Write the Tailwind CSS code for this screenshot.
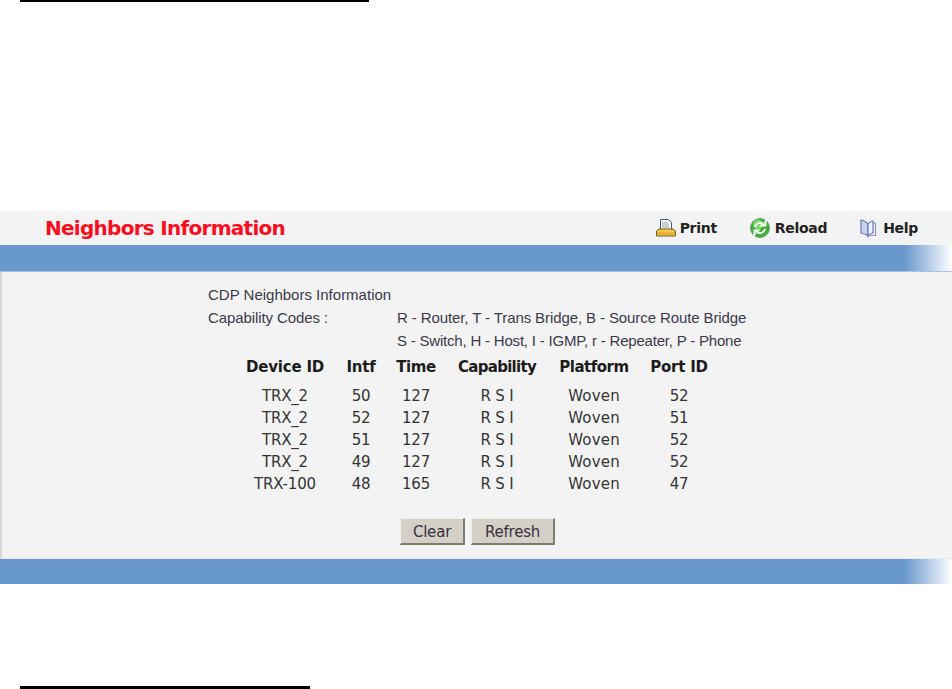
<!DOCTYPE html>
<html lang="en">
<head>
  <meta charset="UTF-8" />
  <title>Neighbors Information</title>
  <script src="https://cdn.jsdelivr.net/npm/@tailwindcss/browser@4"></script>
</head>
<body class="bg-white w-[952px] h-[689px] overflow-hidden flex flex-col font-['Liberation_Sans',sans-serif]">
  <div class="ml-[20px] w-[349px] h-[2px] bg-black"></div>

  <div class="mt-[209px] w-full">
    <!-- title row -->
    <div class="h-[34px] bg-[#f3f3f3] flex items-center pl-[45px] pr-[34px]">
      <h1 class="text-[20px] font-bold text-[#fa0d1e] font-['DejaVu_Sans',sans-serif] tracking-[-0.72px] flex-1">Neighbors Information</h1>
      <div class="flex items-center text-[14px] font-bold text-[#222] font-['DejaVu_Sans',sans-serif] tracking-[-0.3px]">
        <a class="flex items-center gap-[4px] mr-[33px]">
          <svg width="20" height="20" viewBox="1 0 20 20">
            <path d="M5.500 1.500h8l3 3v7h-11z" fill="#eef2f4" stroke="#4a5a78" stroke-width="1"/>
            <path d="M7 5h6M7 7h7M7 9h7" stroke="#9fb0a8" stroke-width="1"/>
            <path d="M4 11h14l2.500 2v5h-19v-5z" fill="#f6c945" stroke="#6d5a2e" stroke-width="1"/>
            <path d="M2.500 15.500h17" stroke="#e8a52a" stroke-width="2"/>
          </svg>
          Print
        </a>
        <a class="flex items-center gap-[5px] mr-[31px]">
          <svg width="20" height="20" viewBox="0 0 20 20">
            <circle cx="10" cy="10" r="9.500" fill="#3fae3a" stroke="#6f9f78" stroke-width="1"/>
            <circle cx="8" cy="6.500" r="5" fill="#7fd66e"/>
            <path d="M5 9a5 5 0 0 1 8-3l-1.500 1.500h4v-4l-1.300 1.300" fill="none" stroke="#fff" stroke-width="1.800"/>
            <path d="M15 11a5 5 0 0 1-8 3l1.500-1.500h-4v4l1.300-1.300" fill="none" stroke="#fff" stroke-width="1.800"/>
          </svg>
          Reload
        </a>
        <a class="flex items-center gap-[5px]">
          <svg width="20" height="20" viewBox="0 0 20 20">
            <path d="M10 6c-1.500-2-4-3.500-7-4v13c3 .5 5.500 1.500 7 3z" fill="#c9d2ee" stroke="#6c78b4" stroke-width="1.200"/>
            <path d="M10 6c1-1.500 2.500-2.500 5-3v12c-2.500.5-4 1.500-5 3z" fill="#eef1fa" stroke="#6c78b4" stroke-width="1.200"/>
            <path d="M15 5h2.500v12.500h-7.500" fill="none" stroke="#8a94c4" stroke-width="1.200"/>
          </svg>
          Help
        </a>
      </div>
    </div>

    <!-- top blue bar -->
    <div class="h-[26px] bg-gradient-to-r from-[#6898cc] from-[95%] to-white"></div>
    <div class="h-[1px] bg-[#a9c4e3]"></div>

    <!-- content -->
    <div class="h-[287px] bg-[#f3f3f3] border-l-2 border-[#d8d8d8] pl-[206px] pt-[11px] border-b border-b-[#e4e8f0]">
      <div class="text-[15px] leading-[23px] text-[#3c3a4a] tracking-[-0.1px]">
        <div class="tracking-[0px]">CDP Neighbors Information</div>
        <div class="flex">
          <div class="w-[189px]">Capability Codes :</div>
          <div>R - Router, T - Trans Bridge, B - Source Route Bridge</div>
        </div>
        <div class="pl-[189px] tracking-[-0.2px]">S - Switch, H - Host, I - IGMP, r - Repeater, P - Phone</div>
      </div>

      <div class="font-['DejaVu_Sans',sans-serif] text-[15px] tracking-[-0.2px] text-[#333] ml-[27px] mt-[1px] w-[484px]">
        <div class="grid grid-cols-[100px_52px_58px_104px_90px_80px] text-center font-bold text-[#1c1c1c] h-[28px] items-center mb-[4px]">
          <div>Device ID</div><div>Intf</div><div class="tracking-[-0.4px]">Time</div><div class="tracking-[-0.7px]">Capability</div><div class="tracking-[-0.5px]">Platform</div><div>Port ID</div>
        </div>
        <div class="grid grid-cols-[100px_52px_58px_104px_90px_80px] auto-rows-[22px] items-center text-center">
          <div>TRX_2</div><div>50</div><div>127</div><div>R S I</div><div class="tracking-[0.2px]">Woven</div><div>52</div>
          <div>TRX_2</div><div>52</div><div>127</div><div>R S I</div><div class="tracking-[0.2px]">Woven</div><div>51</div>
          <div>TRX_2</div><div>51</div><div>127</div><div>R S I</div><div class="tracking-[0.2px]">Woven</div><div>52</div>
          <div>TRX_2</div><div>49</div><div>127</div><div>R S I</div><div class="tracking-[0.2px]">Woven</div><div>52</div>
          <div>TRX-100</div><div>48</div><div>165</div><div>R S I</div><div class="tracking-[0.2px]">Woven</div><div>47</div>
        </div>
      </div>

      <div class="flex gap-[6px] ml-[192px] mt-[23px] font-['DejaVu_Sans',sans-serif] text-[15px] tracking-[-0.2px] text-[#3a3040]">
        <button class="w-[65px] h-[27px] pt-[2px] bg-[#d4d0c8] border border-[#eeeeea] border-r-2 border-b-2 border-r-[#7d7a72] border-b-[#7d7a72]">Clear</button>
        <button class="w-[84px] h-[27px] pt-[2px] bg-[#d4d0c8] border border-[#eeeeea] border-r-2 border-b-2 border-r-[#7d7a72] border-b-[#7d7a72]">Refresh</button>
      </div>
    </div>

    <!-- bottom blue bar -->
    <div class="h-[25px] bg-gradient-to-r from-[#6898cc] from-[95%] to-white"></div>
  </div>

  <div class="ml-[20px] mt-[102px] w-[290px] h-[3px] bg-black"></div>
</body>
</html>
